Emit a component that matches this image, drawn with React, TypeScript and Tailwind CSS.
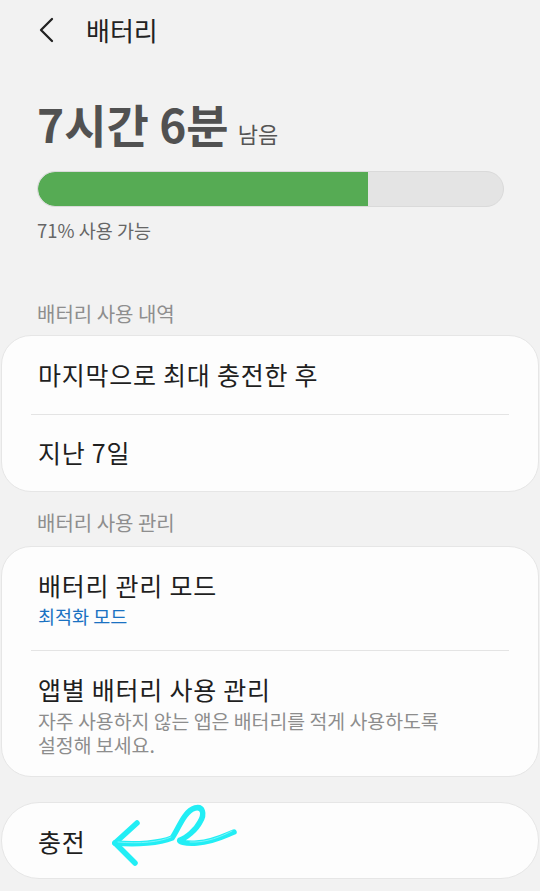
import React from "react";

export default function App() {
  return (
    <div className="w-[540px] h-[891px] bg-[#f2f2f2] overflow-hidden font-['Noto_Sans_CJK_KR','Noto_Sans',sans-serif]">
      {/* Header */}
      <div className="h-[60px] flex items-center">
        <svg width="20" height="28" viewBox="0 0 20 28" className="ml-[37px]">
          <polyline points="15,3 4,14 15,25" fill="none" stroke="#222" strokeWidth="2.3" strokeLinecap="round" strokeLinejoin="round" />
        </svg>
        <div className="ml-[29px] text-[26px] leading-[30px] text-[#222]">배터리</div>
      </div>

      <div className="px-[37px]">
        <div className="mt-[38px] h-[50px] flex items-baseline">
          <span className="text-[46px] leading-[50px] font-bold text-[#515151]">7시간 6분</span>
          <span className="ml-[9px] text-[22px] text-[#555]">남음</span>
        </div>
        <div className="mt-[23px] w-[467px] h-[36px] rounded-full bg-[#e4e4e4] border border-[#dadada] overflow-hidden">
          <div className="h-full w-[71%] bg-[#56ab54] rounded-l-full" />
        </div>
        <div className="mt-[12px] text-[18.5px] leading-[22px] text-[#666]">71% 사용 가능</div>
        <div className="mt-[62px] text-[20px] leading-[22px] text-[#8e8e8e]">배터리 사용 내역</div>
      </div>

      <div className="mt-[10px] mx-[1px] bg-[#fdfdfd] border border-[#e6e6e6] rounded-[30px]">
        <div className="h-[78px] flex items-center px-[36px] text-[25px] tracking-[0.75px] text-[#1f1f1f]">마지막으로 최대 충전한 후</div>
        <div className="mx-[29px] h-[1px] bg-[#e4e4e4]" />
        <div className="h-[76px] flex items-center px-[36px] text-[25px] tracking-[0.75px] text-[#1f1f1f]">지난 7일</div>
      </div>

      <div className="px-[37px] mt-[20px] text-[20px] leading-[22px] text-[#8e8e8e]">배터리 사용 관리</div>

      <div className="mt-[12px] mx-[1px] bg-[#fdfdfd] border border-[#e6e6e6] rounded-[30px]">
        <div className="px-[36px] pt-[23px] pb-[22px]">
          <div className="text-[25px] tracking-[0.75px] leading-[30px] text-[#1f1f1f]">배터리 관리 모드</div>
          <div className="mt-[4px] text-[18.5px] leading-[24px] text-[#1a72c2]">최적화 모드</div>
        </div>
        <div className="mx-[29px] h-[1px] bg-[#e4e4e4]" />
        <div className="px-[36px] pt-[23px] pb-[19px]">
          <div className="text-[25px] tracking-[0.75px] leading-[30px] text-[#1f1f1f]">앱별 배터리 사용 관리</div>
          <div className="mt-[5px] text-[19.4px] leading-[24px] text-[#8d8d8d]">
            자주 사용하지 않는 앱은 배터리를 적게 사용하도록
            <br />
            설정해 보세요.
          </div>
        </div>
      </div>

      <div className="relative mt-[25px] mx-[1px] h-[77px] bg-[#fdfdfd] border border-[#e6e6e6] rounded-[38px] flex items-center px-[36px]">
        <span className="text-[25px] tracking-[0.75px] text-[#1f1f1f] mt-[2px]">충전</span>
        <svg className="absolute left-[100px] top-[-3px]" width="140" height="70" viewBox="100 800 140 70">
          <g fill="none" stroke="#22eef5" strokeWidth="5.5" strokeLinecap="round" strokeLinejoin="round">
            <path d="M113 843 L135 823" />
            <path d="M113 843 L133 863" />
            <path d="M113 843 C135 845 158 843 170 838 C176 830 182 811 193 808 C201 806 203 814 198 822 C194 830 184 838 178 840 C176 841 182 844 195 843 C212 842 222 836 232 832" />
          </g>
          <g fill="none" stroke="#8ff8fb" strokeWidth="1" strokeLinecap="round" opacity="0.8">
            <path d="M116 842 C138 844 158 842 169 837" />
            <path d="M188 842 C205 843 220 836 230 831" />
          </g>
        </svg>
      </div>
    </div>
  );
}
